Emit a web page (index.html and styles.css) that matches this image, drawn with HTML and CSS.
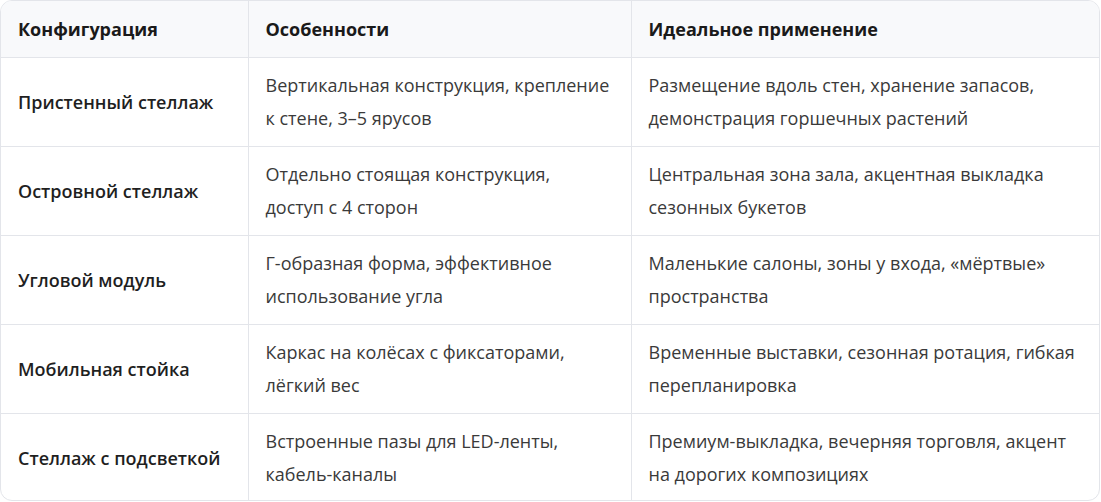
FILE: index.html
```html
<!DOCTYPE html>
<html lang="ru">
<head>
<meta charset="utf-8">
<link rel="stylesheet" href="styles.css">
</head>
<body>
<div class="wrap">
<table class="tbl">
<colgroup><col class="c1"><col class="c2"><col class="c3"></colgroup>
<thead>
<tr><th>Конфигурация</th><th>Особенности</th><th>Идеальное применение</th></tr>
</thead>
<tbody>
<tr><td class="name">Пристенный стеллаж</td><td>Вертикальная конструкция, крепление к стене, 3–5 ярусов</td><td>Размещение вдоль стен, хранение запасов, демонстрация горшечных растений</td></tr>
<tr><td class="name">Островной стеллаж</td><td>Отдельно стоящая конструкция, доступ с 4 сторон</td><td>Центральная зона зала, акцентная выкладка сезонных букетов</td></tr>
<tr><td class="name">Угловой модуль</td><td>Г-образная форма, эффективное использование угла</td><td>Маленькие салоны, зоны у входа, «мёртвые» пространства</td></tr>
<tr><td class="name">Мобильная стойка</td><td>Каркас на колёсах с фиксаторами, лёгкий вес</td><td>Временные выставки, сезонная ротация, гибкая перепланировка</td></tr>
<tr><td class="name">Стеллаж с подсветкой</td><td>Встроенные пазы для LED-ленты, кабель-каналы</td><td>Премиум-выкладка, вечерняя торговля, акцент на дорогих композициях</td></tr>
</tbody>
</table>
</div>
</body>
</html>
```
FILE: styles.css
```css
html, body { margin: 0; padding: 0; background: #fff; }
body { font-family: "Open Sans", "Noto Sans", sans-serif; }
.wrap {
  width: 1098px;
  border: 1px solid #e3e5ea;
  border-radius: 12px;
  overflow: hidden;
}
.tbl {
  width: 100%;
  border-collapse: collapse;
  table-layout: fixed;
  font-size: 18px;
  line-height: 33px;
}
.c1 { width: 247px; }
.c2 { width: 383px; }
.tbl th, .tbl td {
  text-align: left;
  vertical-align: middle;
  padding: 11px 20px 11px 17px;
  border-right: 1px solid #e3e5ea;
  border-bottom: 1px solid #e3e5ea;
}
.tbl th { padding: 12px 20px 11px 17px; }
.tbl th:last-child, .tbl td:last-child { border-right: none; }
.tbl tbody tr:last-child td { border-bottom: none; padding-bottom: 9px; }
.tbl th {
  background: #f8f9fb;
  color: #1a1a1a;
  font-weight: 700;
}
.tbl td { color: #3a3a3a; }
.tbl td.name { font-weight: 600; color: #1f1f1f; }
```
